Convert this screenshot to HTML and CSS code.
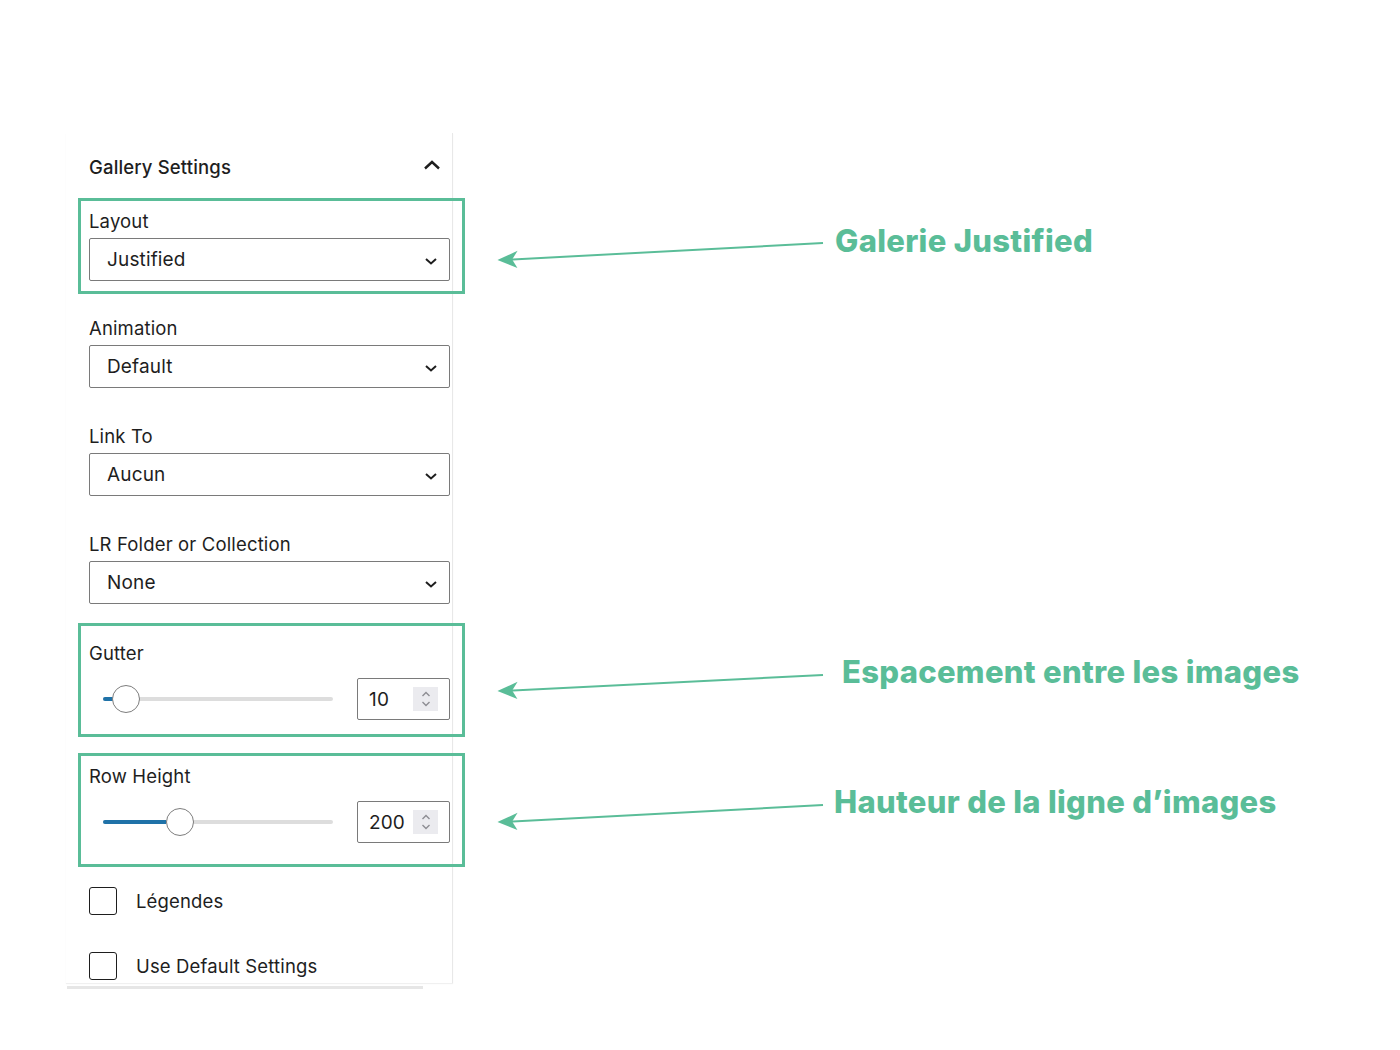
FILE: index.html
```html
<!DOCTYPE html>
<html lang="fr">
<head>
    <meta charset="UTF-8">
    <title>Gallery Settings</title>
    <link rel="stylesheet" href="styles.css">
</head>
<body>
    <div class="page">
        <div class="panel">
            <div class="panel-header">
                <h2 class="panel-title">Gallery Settings</h2>
                <svg class="toggle" width="18" height="12" viewBox="0 0 18 12">
                    <path d="M2 9.5 L9 3 L16 9.5" fill="none" stroke="#1e1e1e" stroke-width="2.4"/>
                </svg>
            </div>

            <div class="highlight hl-layout">
                <label class="field-label">Layout</label>
                <div class="select">
                    <span>Justified</span>
                    <svg width="14" height="10" viewBox="0 0 14 10"><path d="M2 3 L7 7.5 L12 3" fill="none" stroke="#1e1e1e" stroke-width="2"/></svg>
                </div>
            </div>

            <div class="field field-first">
                <label class="field-label">Animation</label>
                <div class="select">
                    <span>Default</span>
                    <svg width="14" height="10" viewBox="0 0 14 10"><path d="M2 3 L7 7.5 L12 3" fill="none" stroke="#1e1e1e" stroke-width="2"/></svg>
                </div>
            </div>

            <div class="field">
                <label class="field-label">Link To</label>
                <div class="select">
                    <span>Aucun</span>
                    <svg width="14" height="10" viewBox="0 0 14 10"><path d="M2 3 L7 7.5 L12 3" fill="none" stroke="#1e1e1e" stroke-width="2"/></svg>
                </div>
            </div>

            <div class="field">
                <label class="field-label">LR Folder or Collection</label>
                <div class="select">
                    <span>None</span>
                    <svg width="14" height="10" viewBox="0 0 14 10"><path d="M2 3 L7 7.5 L12 3" fill="none" stroke="#1e1e1e" stroke-width="2"/></svg>
                </div>
            </div>

            <div class="highlight hl-gutter">
                <label class="field-label">Gutter</label>
                <div class="range-row">
                    <div class="range">
                        <div class="track">
                            <div class="fill" style="width: 10px;"></div>
                            <div class="thumb" style="left: 9px;"></div>
                        </div>
                    </div>
                    <div class="number">
                        <span>10</span>
                        <div class="spin">
                            <svg width="12" height="20" viewBox="0 0 12 20"><path d="M2.5 7 L6 3.5 L9.5 7 M2.5 13 L6 16.5 L9.5 13" fill="none" stroke="#8d8d93" stroke-width="1.4"/></svg>
                        </div>
                    </div>
                </div>
            </div>

            <div class="highlight hl-row">
                <label class="field-label">Row Height</label>
                <div class="range-row">
                    <div class="range">
                        <div class="track">
                            <div class="fill" style="width: 63px;"></div>
                            <div class="thumb" style="left: 63px;"></div>
                        </div>
                    </div>
                    <div class="number">
                        <span>200</span>
                        <div class="spin">
                            <svg width="12" height="20" viewBox="0 0 12 20"><path d="M2.5 7 L6 3.5 L9.5 7 M2.5 13 L6 16.5 L9.5 13" fill="none" stroke="#8d8d93" stroke-width="1.4"/></svg>
                        </div>
                    </div>
                </div>
            </div>

            <div class="check check-first">
                <span class="box"></span>
                <span>Légendes</span>
            </div>
            <div class="check">
                <span class="box"></span>
                <span>Use Default Settings</span>
            </div>
        </div>
        <div class="panel-foot"></div>

        <!-- annotations -->
        <svg class="arrows" width="1400" height="1050" viewBox="0 0 1400 1050">
            <g stroke="#5abd98" stroke-width="2" fill="#5abd98">
                <line x1="823" y1="243" x2="503" y2="260"/>
                <path d="M500 260 L515 253 L511 259.5 L515 266 Z"/>
                <line x1="823" y1="675" x2="503" y2="691"/>
                <path d="M500 691 L515 684 L511 690.5 L515 697 Z"/>
                <line x1="823" y1="805" x2="503" y2="822"/>
                <path d="M500 822 L515 815 L511 821.5 L515 828 Z"/>
            </g>
        </svg>
        <div class="note note-layout">Galerie Justified</div>
        <div class="note note-gutter">Espacement entre les images</div>
        <div class="note note-row">Hauteur de la ligne d’images</div>
    </div>
</body>
</html>
```

FILE: styles.css
```css
* {
    margin: 0;
    padding: 0;
    box-sizing: border-box;
}

body {
    font-family: Inter, 'Noto Sans', Arial, sans-serif;
    color: #1e1e1e;
    background: #fff;
    letter-spacing: 0.15px;
}

.page {
    position: relative;
    width: 1400px;
    height: 1050px;
    padding: 133px 0 0 66px;
}

.panel {
    width: 387px;
    border-right: 1px solid #e8e8e8;
    padding: 0 2px 3px 23px;
    box-shadow: 0 1px 1px rgba(0,0,0,0.06);
}

.panel-foot {
    width: 356px;
    height: 3px;
    margin-top: 3px;
    margin-left: 1px;
    background: #e6e6e6;
}

.panel-header {
    display: flex;
    justify-content: space-between;
    align-items: flex-start;
    padding: 21px 9px 0 0;
    height: 65px;
}

.panel-title {
    font-size: 18.5px;
    font-weight: 500;
    line-height: 26px;
}

.toggle {
    margin-top: 5px;
}

.field-label {
    display: block;
    font-size: 18.5px;
    line-height: 24px;
    margin-bottom: 5px;
}

.select {
    height: 43px;
    border: 1px solid #7a7a7a;
    border-radius: 2px;
    display: flex;
    align-items: center;
    justify-content: space-between;
    padding: 0 11px 0 17px;
    font-size: 19px;
}

.select svg {
    margin-top: 2px;
}

.highlight {
    border: 3px solid #5abd98;
    margin: 0 -15px 0 -11px;
    padding: 8px 12px 10px 8px;
}

.field {
    margin-top: 36px;
}

.field-first {
    margin-top: 22px;
}

.hl-gutter {
    margin-top: 19px;
    padding-top: 15px;
    padding-bottom: 14px;
}

.hl-row {
    margin-top: 16px;
    padding-top: 8px;
    padding-bottom: 21px;
}

.range-row {
    display: flex;
    align-items: center;
    justify-content: space-between;
    margin-top: 13px;
}

.range {
    width: 244px;
    padding-left: 14px;
}

.track {
    position: relative;
    height: 4px;
    background: #dddddd;
    border-radius: 2px;
}

.fill {
    height: 4px;
    background: #1f72a8;
    border-radius: 2px 0 0 2px;
}

.thumb {
    position: absolute;
    top: -12px;
    width: 28px;
    height: 28px;
    border-radius: 50%;
    background: #fff;
    border: 1.5px solid #7d7d7d;
}

.number {
    width: 93px;
    height: 42px;
    border: 1px solid #7a7a7a;
    border-radius: 2px;
    display: flex;
    align-items: center;
    justify-content: space-between;
    padding: 0 11px;
    font-size: 19px;
}

.spin {
    width: 25px;
    height: 24px;
    background: #ebebef;
    display: flex;
    align-items: center;
    justify-content: center;
}

.check {
    display: flex;
    align-items: center;
    gap: 19px;
    font-size: 18.5px;
    margin-top: 37px;
}

.check-first {
    margin-top: 20px;
}

.box {
    width: 28px;
    height: 28px;
    border: 1.5px solid #1e1e1e;
    border-radius: 3px;
}

.arrows {
    position: absolute;
    top: 0;
    left: 0;
}

.note {
    position: absolute;
    font-family: Inter, 'Noto Sans', sans-serif;
    font-weight: 800;
    font-size: 31px;
    letter-spacing: 0.3px;
    line-height: 36px;
    color: #5abd98;
    white-space: nowrap;
}

.note-layout {
    left: 835px;
    top: 223px;
}

.note-gutter {
    left: 842px;
    top: 654px;
}

.note-row {
    left: 834px;
    top: 784px;
}
```
